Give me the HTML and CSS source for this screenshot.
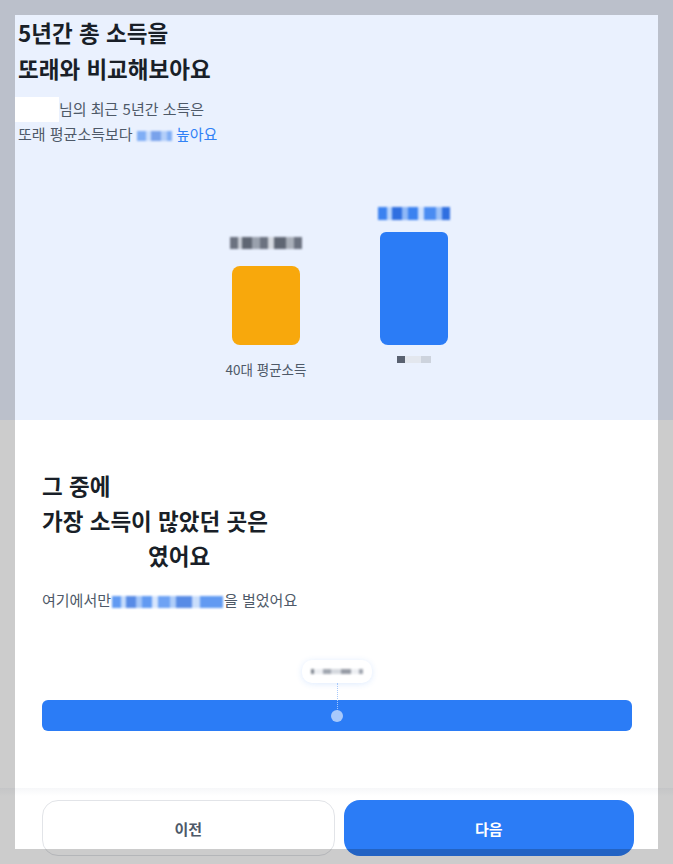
FILE: index.html
```html
<!DOCTYPE html>
<html lang="ko">
<head>
  <meta charset="UTF-8" />
  <meta name="viewport" content="width=device-width, initial-scale=1.0" />
  <title>소득 비교</title>
  <link rel="stylesheet" href="styles.css">
</head>
<body>
  <div class="page">
    <section class="compare">
      <h1 class="title">5년간 총 소득을<br>또래와 비교해보아요</h1>
      <p class="desc"><span class="name-mask"></span>님의 최근 5년간 소득은<br>또래 평균소득보다 <span class="px px-blue px-sm"></span> <span class="accent">높아요</span></p>

      <div class="chart">
        <div class="col">
          <span class="px px-gray px-amount"></span>
          <div class="bar bar-avg" style="height: 79px"></div>
          <div class="col-label"><span class="label-text">40대 평균소득</span></div>
        </div>
        <div class="col">
          <span class="px px-blue px-amount-me"></span>
          <div class="bar bar-me" style="height: 113px"></div>
          <div class="col-label"><span class="px px-name"></span></div>
        </div>
      </div>
    </section>

    <section class="top-place">
      <h2 class="title">그 중에<br>가장 소득이 많았던 곳은<br><span class="place-mask"></span>였어요</h2>
      <p class="desc">여기에서만<span class="px px-blue px-earned"></span>을 벌었어요</p>

      <div class="timeline">
        <div class="tip"><span class="px px-dark px-tip"></span></div>
        <div class="track">
          <span class="tip-line"></span>
          <span class="knob"></span>
        </div>
      </div>
    </section>

    <div class="bottom-bar">
      <button class="btn btn-prev">이전</button>
      <button class="btn btn-next">다음</button>
    </div>

    <!-- dims everything outside the sheet -->
    <div class="sheet-hole"></div>
  </div>
</body>
</html>
```

FILE: styles.css
```css
* {
  box-sizing: border-box;
}
body {
  margin: 0;
  font-family: "Noto Sans CJK KR", "Noto Sans", sans-serif;
  color: #191f28;
  background: #fff;
}
.page {
  position: relative;
  width: 673px;
  height: 864px;
  overflow: hidden;
}
.title {
  margin: 0;
  font-size: 22.5px;
  font-weight: 700;
  line-height: 36px;
}
.desc {
  margin: 0;
  font-size: 15px;
  line-height: 24px;
  color: #4e5968;
}
.accent {
  color: #3182f6;
}

/* top block */
.compare {
  height: 420px;
  padding: 14px 18px 0;
  background: #eaf1fe;
}
.compare .desc {
  margin-top: 11px;
}
.name-mask {
  display: inline-block;
  width: 44px;
  height: 25px;
  margin-left: -3px;
  vertical-align: -7px;
  background: #fff;
}

/* pixelated, hidden values */
.px {
  display: inline-block;
  vertical-align: middle;
  filter: blur(0.9px);
}
.px-gray {
  background: linear-gradient(90deg, #6b7280 0 8px, #c9ced6 8px 12px, #5f6673 12px 22px, #9aa1ad 22px 30px, #6b7280 30px 38px, #d5d9e0 38px 44px, #5f6673 44px 56px, #a9afb9 56px 64px, #6b7280 64px);
}
.px-blue {
  background: linear-gradient(90deg, #3b82f0 0 9px, #b7d3fb 9px 14px, #2f6fe0 14px 24px, #8fb8f7 24px 30px, #3b82f0 30px 40px, #cfe1fd 40px 46px, #4a8cf2 46px 58px, #9cc1f8 58px 64px, #2f6fe0 64px 80px, #bdd6fb 80px 88px, #3b82f0 88px);
}
.px-dark {
  background: linear-gradient(90deg, #4b5563 0 3px, #e6e9ef 3px 12px, #7a8290 12px 20px, #c4c9d2 20px 30px, #6b7280 30px 40px, #e6e9ef 40px 48px, #7a8290 48px);
}
.px-sm {
  width: 35px;
  height: 10px;
  opacity: 0.6;
}

.chart {
  display: flex;
  justify-content: center;
  align-items: flex-end;
  gap: 68px;
  height: 240px;
  padding-left: 7px;
}
.col {
  width: 80px;
  display: flex;
  flex-direction: column;
  align-items: center;
}
.px-amount {
  width: 72px;
  height: 12px;
  margin-bottom: 17px;
}
.px-amount-me {
  width: 72px;
  height: 13px;
  margin-bottom: 12px;
}
.bar {
  width: 68px;
  border-radius: 8px;
}
.bar-avg {
  background: #f8a80c;
}
.bar-me {
  background: #2b7cf6;
  border-radius: 6px 6px 8px 8px;
}
.col-label {
  height: 30px;
  margin-top: 11px;
}
.label-text {
  display: block;
  margin-top: 4px;
  font-size: 13.5px;
  line-height: 18px;
  color: #4e5968;
  white-space: nowrap;
}
.px-name {
  width: 34px;
  height: 7px;
  vertical-align: top;
  filter: blur(0.5px);
  background: linear-gradient(90deg, #596170 0 8px, #e3e7ee 8px 24px, #cdd3dd 24px 34px);
}

/* lower block */
.top-place {
  height: 368px;
  padding: 48px 39px 0 42px;
}
.top-place .title {
  line-height: 35px;
}
.place-mask {
  display: inline-block;
  width: 106px;
}
.top-place .desc {
  margin-top: 15px;
}
.px-earned {
  width: 111px;
  height: 12px;
  margin: 0 1px;
  opacity: 0.8;
}

.timeline {
  margin-top: 48px;
}
.tip {
  width: 70px;
  height: 23px;
  margin: 0 0 17px 260px;
  display: flex;
  align-items: center;
  justify-content: center;
  background: #fff;
  border-radius: 10px;
  box-shadow: 0 1px 6px rgba(49, 130, 246, 0.16);
}
.px-tip {
  width: 52px;
  height: 5px;
  opacity: 0.7;
}
.track {
  position: relative;
  width: 590px;
  height: 31px;
  background: #2b7cf6;
  border-radius: 6px;
}
.tip-line {
  position: absolute;
  left: 295px;
  top: -17px;
  height: 28px;
  border-left: 1px dotted #a8c9fb;
}
.knob {
  position: absolute;
  left: 289px;
  top: 10px;
  width: 12px;
  height: 12px;
  border-radius: 50%;
  background: #a8c9fb;
}

/* footer buttons */
.bottom-bar {
  display: flex;
  gap: 9px;
  height: 76px;
  padding: 12px 39px 8px 42px;
  background: linear-gradient(to bottom, #f6f7f9 0, #fff 8px);
}
.btn {
  flex: 1 1 0;
  height: 56px;
  border-radius: 16px;
  font-family: inherit;
  font-size: 15px;
  font-weight: 700;
  cursor: pointer;
}
.btn-prev {
  background: #fff;
  color: #4e5968;
  border: 1px solid #e2e4e8;
}
.btn-next {
  background: #2b7cf6;
  color: #fff;
  border: none;
}

.sheet-hole {
  position: absolute;
  left: 15px;
  top: 15px;
  width: 643px;
  height: 834px;
  box-shadow: 0 0 0 1000px rgba(0, 0, 0, 0.2);
  pointer-events: none;
}
```
